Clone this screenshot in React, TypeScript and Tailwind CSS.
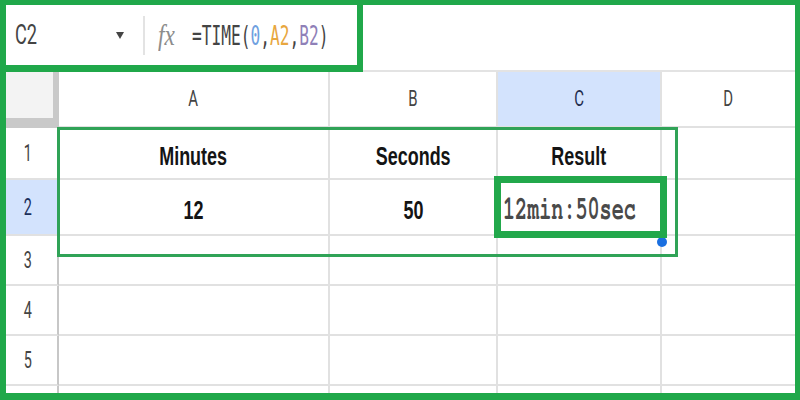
import React from "react";

const COLS = [271, 168, 164];
const ROWS = [52, 56, 50, 50, 50];

function BoldText({ children }: { children: React.ReactNode }) {
  return (
    <span className="inline-block scale-x-[0.69] whitespace-nowrap font-['Liberation_Sans',Arial,sans-serif] text-[26px] font-bold leading-none text-[#141414]">
      {children}
    </span>
  );
}

export default function App() {
  const cells: Record<string, React.ReactNode> = {
    "0-0": <BoldText>Minutes</BoldText>,
    "0-1": <BoldText>Seconds</BoldText>,
    "0-2": <BoldText>Result</BoldText>,
    "1-0": <BoldText>12</BoldText>,
    "1-1": <BoldText>50</BoldText>,
  };

  return (
    <div className="relative h-[400px] w-[800px] overflow-hidden bg-white">
      <div className="flex h-full flex-col border-t-[5px] border-r-[5px] border-b-[7px] border-l-[6px] border-[#20a84a]">
        {/* formula bar */}
        <div className="flex h-[67px] shrink-0">
          <div className="flex w-[357px] shrink-0 items-center border-r-[6px] border-b-[7px] border-[#20a84a]">
            <div className="flex w-[137px] shrink-0 items-center justify-between pl-[9px] pr-[19px]">
              <span className="inline-block origin-left scale-x-[0.65] font-['Roboto',sans-serif] text-[28px] leading-none text-[#444]">
                C2
              </span>
              <svg width="8" height="7" viewBox="0 0 8 7">
                <path d="M0 0H8L4 7Z" fill="#444" />
              </svg>
            </div>
            <div className="h-[39px] w-[2px] shrink-0 bg-[#e3e3e3]" />
            <span className="ml-[13px] inline-block w-[20px] shrink-0 origin-left scale-x-[0.8] whitespace-nowrap font-['Liberation_Serif',serif] text-[29px] italic leading-none text-[#8c8c8c]">
              fx
            </span>
            <span className="ml-[14px] inline-block shrink-0 origin-left scale-x-[0.6] whitespace-nowrap font-['DejaVu_Sans_Mono',monospace] text-[27px] leading-none text-[#444]">
              =TIME(<span className="text-[#6f9fe0]">0</span>,
              <span className="text-[#e8a73f]">A2</span>,
              <span className="text-[#8f80b8]">B2</span>)
            </span>
          </div>
          <div className="flex-1 border-b-2 border-[#e3e3e3]" />
        </div>

        {/* column header row */}
        <div className="flex h-[56px] shrink-0">
          <div className="w-[53px] shrink-0 border-r-[6px] border-b-[10px] border-[#c9c9c9] bg-[#f3f3f3]" />
          {["A", "B", "C"].map((l, i) => (
            <div
              key={l}
              style={{ width: COLS[i] }}
              className={`flex shrink-0 items-center justify-center border-r-2 border-b-2 border-[#e1e1e1] ${
                l === "C" ? "bg-[#d3e3fd]" : "bg-white"
              }`}
            >
              <span
                className={`inline-block scale-x-[0.68] font-['Roboto',sans-serif] text-[22px] leading-none ${
                  l === "C" ? "text-[#1f2d4d]" : "text-[#444]"
                }`}
              >
                {l}
              </span>
            </div>
          ))}
          <div className="flex flex-1 items-center justify-center border-b-2 border-[#e1e1e1]">
            <span className="inline-block scale-x-[0.68] font-['Roboto',sans-serif] text-[22px] leading-none text-[#444]">
              D
            </span>
          </div>
        </div>

        {/* rows */}
        {ROWS.map((h, r) => (
          <div key={r} style={{ height: h }} className="flex shrink-0">
            <div
              className={`flex w-[53px] shrink-0 items-center justify-center border-r-2 border-b-2 border-r-[#c7c7c7] border-b-[#e1e1e1] pr-[8px] ${
                r === 1 ? "bg-[#d3e3fd]" : "bg-white"
              }`}
            >
              <span
                className={`inline-block scale-x-[0.6] font-['Roboto',sans-serif] text-[24px] leading-none ${
                  r === 1 ? "text-[#1b2f5b]" : "text-[#444]"
                }`}
              >
                {r + 1}
              </span>
            </div>
            {COLS.map((w, c) => (
              <div
                key={c}
                style={{ width: w }}
                className={`flex shrink-0 items-center border-r-2 border-b-2 border-[#e1e1e1] ${
                  r === 1 && c === 2 ? "justify-start pl-[5px]" : "justify-center pt-[6px]"
                }`}
              >
                {r === 1 && c === 2 ? (
                  <span className="inline-block origin-left scale-x-[0.61] whitespace-nowrap pt-[4px] font-['Nimbus_Mono_PS','FreeMono','Courier_New','Liberation_Mono',monospace] text-[33px] font-bold leading-none text-[#4a4a4a]">
                    12min:50sec
                  </span>
                ) : (
                  cells[`${r}-${c}`]
                )}
              </div>
            ))}
            <div className="flex-1 border-b-2 border-[#e1e1e1]" />
          </div>
        ))}
        <div className="flex flex-1">
          <div className="w-[53px] shrink-0 border-r-2 border-[#c7c7c7]" />
          {COLS.map((w, c) => (
            <div key={c} style={{ width: w }} className="shrink-0 border-r-2 border-[#e1e1e1]" />
          ))}
          <div className="flex-1" />
        </div>
      </div>

      {/* overlays */}
      <div className="absolute left-[57px] top-[127px] h-[130px] w-[621px] border-[3px] border-[#30a357]" />
      <div className="absolute left-[657px] top-[237px] h-[10px] w-[10px] rounded-full bg-[#1a6fe0]" />
      <div className="absolute left-[494px] top-[176px] h-[62px] w-[173px] border-[7px] border-[#22a84b]" />
    </div>
  );
}
